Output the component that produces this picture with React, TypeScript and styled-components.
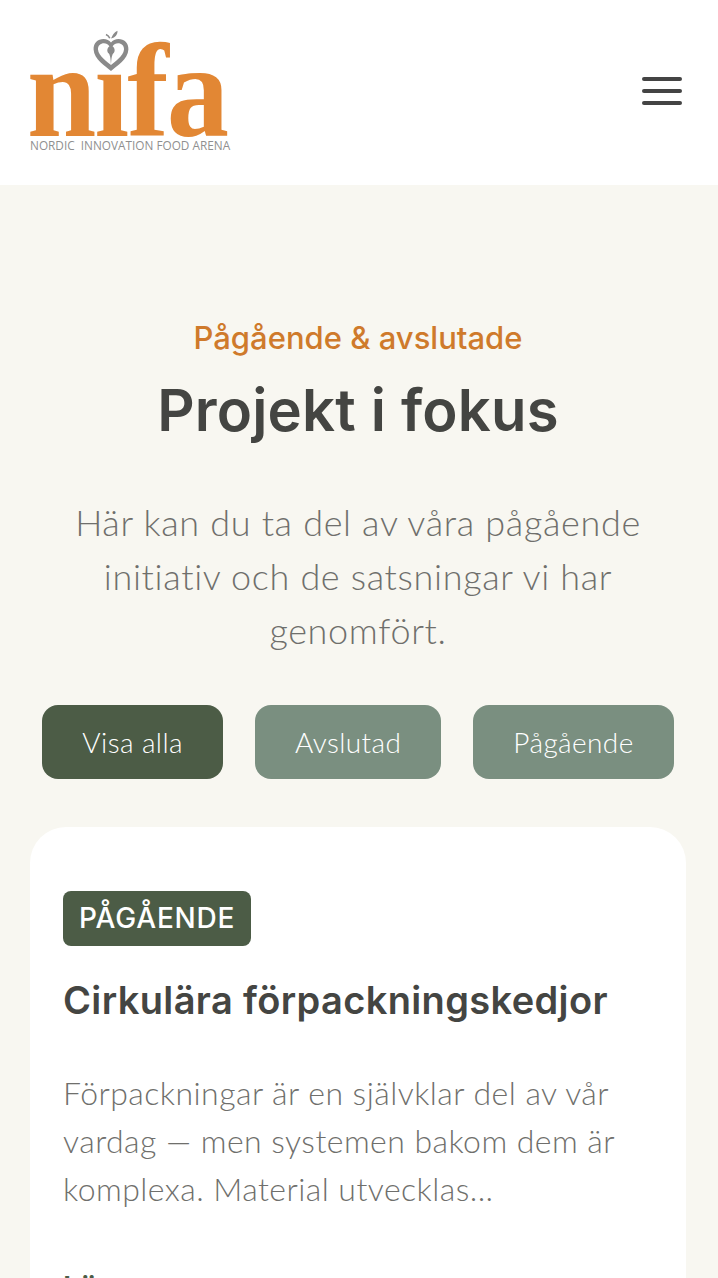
import React from 'react';
import styled, { createGlobalStyle } from 'styled-components';

const filters = [
  { label: 'Visa alla', active: true },
  { label: 'Avslutad', active: false },
  { label: 'Pågående', active: false },
];

export default function App() {
  return (
    <>
      <GlobalStyle />
      <Header>
        <Logo>
          <LogoWord>
            <LogoLetters>nıfa</LogoLetters>
            <LogoHeart viewBox="0 0 36 42" aria-hidden="true">
              <path d="M18 8.5C20 5 20.5 2.8 24.5 0.8 24.6 4.6 22.6 7.6 18 8.5Z" fill="#8a8a8a" />
              <path d="M13 4.5C14.6 5.2 16 6.4 16.8 8.2" stroke="#8a8a8a" strokeWidth="1.6" fill="none" />
              <path
                fillRule="evenodd"
                fill="#8a8a8a"
                d="M18 41C12 36 1 29 0.6 19.5 0.3 13 5 9 10.5 9 13.6 9 16.4 10.3 18 12.4 19.6 10.3 22.4 9 25.5 9 31 9 35.7 13 35.4 19.5 35 29 24 36 18 41ZM18 35C21.5 32 30.5 26 31 19.5 31.3 15.6 28.4 13.2 25 13.2 23 13.2 20.8 14.4 19.6 16.2 21.8 18 22.6 21 20.2 23.6 19 25 18.4 28 18 35ZM18 35C17.6 28 17 25 15.8 23.6 13.4 21 14.2 18 16.4 16.2 15.2 14.4 13 13.2 11 13.2 7.6 13.2 4.7 15.6 5 19.5 5.5 26 14.5 32 18 35Z"
              />
            </LogoHeart>
          </LogoWord>
          <LogoTagline>NORDIC&nbsp; INNOVATION FOOD ARENA</LogoTagline>
        </Logo>
        <MenuButton aria-label="Meny">
          <MenuLine />
          <MenuLine />
          <MenuLine />
        </MenuButton>
      </Header>
      <Main>
        <Intro>
          <Eyebrow>Pågående &amp; avslutade</Eyebrow>
          <Heading>Projekt i fokus</Heading>
          <Lead>Här kan du ta del av våra pågående initiativ och de satsningar vi har genomfört.</Lead>
        </Intro>
        <Filters>
          {filters.map((f) => (
            <FilterButton key={f.label} $active={f.active}>
              {f.label}
            </FilterButton>
          ))}
        </Filters>
        <Card>
          <Badge>PÅGÅENDE</Badge>
          <CardTitle>Cirkulära förpackningskedjor</CardTitle>
          <CardText>Förpackningar är en självklar del av vår vardag — men systemen bakom dem är komplexa. Material utvecklas...</CardText>
          <CardLink>Läs mer</CardLink>
        </Card>
      </Main>
    </>
  );
}

const GlobalStyle = createGlobalStyle`
  html, body {
    margin: 0;
    height: 100%;
    overflow: hidden;
    background: #f8f7f1;
  }
  * { box-sizing: border-box; }
`;

const Header = styled.header`
  height: 185px;
  background: #fff;
  display: flex;
  align-items: flex-start;
  justify-content: space-between;
  padding: 0 36px 0 30px;
`;

const Logo = styled.div`
  display: flex;
  flex-direction: column;
  padding-top: 30px;
`;

const LogoWord = styled.div`
  position: relative;
  height: 108px;
  width: 200px;
  font-family: 'Liberation Serif', serif;
  font-weight: 700;
  font-size: 134px;
  line-height: 122px;
  letter-spacing: -2px;
  color: #e28734;
`;

/* the wordmark is narrower than the serif, squeeze it to the logo's width */
const LogoLetters = styled.span`
  display: inline-block;
  transform: translateX(-3px) scaleX(0.93);
  transform-origin: left center;
`;

const LogoHeart = styled.svg`
  position: absolute;
  left: 63px;
  top: 0;
  width: 36px;
  height: 42px;
`;

const LogoTagline = styled.div`
  font-family: 'Open Sans', sans-serif;
  font-size: 11.8px;
  line-height: 14px;
  color: #8f8f8f;
  white-space: nowrap;
`;

const MenuButton = styled.button`
  margin-top: 77px;
  width: 40px;
  display: flex;
  flex-direction: column;
  gap: 8px;
  padding: 0;
  border: 0;
  background: none;
`;

const MenuLine = styled.span`
  display: block;
  height: 4px;
  border-radius: 2px;
  background: #444;
`;

const Main = styled.main`
  padding: 133px 32px 0 30px;
`;

const Intro = styled.div`
  display: flex;
  flex-direction: column;
  align-items: center;
  text-align: center;
`;

const Eyebrow = styled.div`
  font-family: Inter, sans-serif;
  font-size: 31px;
  font-weight: 500;
  line-height: 40px;
  color: #cf7a2b;
`;

const Heading = styled.h1`
  margin: 20px 0 0;
  font-family: Inter, sans-serif;
  font-size: 58px;
  font-weight: 600;
  line-height: 64px;
  letter-spacing: 0.2px;
  color: #444542;
`;

const Lead = styled.p`
  margin: 53px 20px 0;
  font-family: Lato, sans-serif;
  font-size: 36px;
  font-weight: 300;
  line-height: 54px;
  letter-spacing: 0.66px;
  color: #6f6f6c;
`;

const Filters = styled.div`
  display: flex;
  justify-content: center;
  gap: 32px;
  margin-top: 48px;
`;

const FilterButton = styled.button<{ $active: boolean }>`
  height: 74px;
  padding: 0 40px;
  border: 0;
  border-radius: 16px;
  background: ${(p) => (p.$active ? '#4c5c46' : '#7a8f80')};
  color: #fff;
  font-family: Lato, sans-serif;
  font-size: 28px;
  font-weight: 300;
  letter-spacing: 0.4px;
  white-space: nowrap;
`;

const Card = styled.article`
  margin-top: 48px;
  width: 656px;
  height: 620px;
  border-radius: 36px;
  background: #fff;
  padding: 64px 33px;
`;

const Badge = styled.span`
  display: inline-block;
  height: 55px;
  padding: 0 16px;
  border-radius: 8px;
  background: #4c5c46;
  color: #fff;
  font-family: Inter, sans-serif;
  font-size: 28px;
  font-weight: 500;
  line-height: 55px;
  letter-spacing: 0.8px;
`;

const CardTitle = styled.h2`
  margin: 27px 0 0;
  font-family: Inter, sans-serif;
  font-size: 38px;
  font-weight: 600;
  line-height: 54px;
  letter-spacing: 0.36px;
  color: #444542;
`;

const CardText = styled.p`
  margin: 42px 0 0;
  font-family: Lato, sans-serif;
  font-size: 32px;
  font-weight: 300;
  line-height: 48px;
  letter-spacing: 0.45px;
  color: #6f6f6c;
`;

const CardLink = styled.div`
  margin-top: 50px;
  font-family: Inter, sans-serif;
  font-size: 30px;
  font-weight: 600;
  line-height: 48px;
  color: #4c5c46;
`;
